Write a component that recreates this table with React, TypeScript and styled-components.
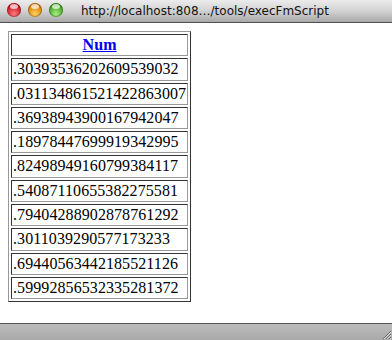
import React from "react";
import styled, { createGlobalStyle } from "styled-components";

const nums = [
  ".30393536202609539032",
  ".031134861521422863007",
  ".36938943900167942047",
  ".18978447699919342995",
  ".82498949160799384117",
  ".54087110655382275581",
  ".79404288902878761292",
  ".3011039290577173233",
  ".69440563442185521126",
  ".59992856532335281372",
];

const GlobalStyle = createGlobalStyle`
  html, body {
    margin: 0;
    padding: 0;
    background: #fff;
  }
`;

const Window = styled.div`
  width: 392px;
  height: 340px;
  display: flex;
  flex-direction: column;
  overflow: hidden;
`;

const TitleBar = styled.div`
  height: 22px;
  flex: none;
  display: flex;
  align-items: center;
  padding-left: 7px;
  background: linear-gradient(#ececec, #d2d2d2 50%, #a9a9a9);
  border-bottom: 1px solid #4f4f4f;
`;

const Lights = styled.div`
  display: flex;
  gap: 7px;
  margin-right: 18px;
  margin-top: -3px;
`;

const Light = styled.span<{ $c1: string; $c2: string }>`
  width: 14px;
  height: 14px;
  border-radius: 50%;
  background: radial-gradient(circle at 50% 78%, ${(p) => p.$c2}, ${(p) => p.$c1} 70%);
  box-shadow: inset 0 0 0 1px rgba(0, 0, 0, 0.25);
  position: relative;
  &::after {
    content: "";
    position: absolute;
    left: 3px;
    top: 1px;
    width: 8px;
    height: 5px;
    border-radius: 50%;
    background: rgba(255, 255, 255, 0.7);
  }
`;

const Title = styled.div`
  font-family: "DejaVu Sans", sans-serif;
  font-size: 12px;
  color: #111;
  white-space: nowrap;
  margin-top: -1px;
`;

const Content = styled.div`
  flex: 1;
  padding: 8px;
  background: #fff;
`;

const Table = styled.table`
  border: 1px solid;
  border-color: #999 #333 #333 #999;
  border-spacing: 2px;
  font-family: "Liberation Serif", "Times New Roman", serif;
  font-size: 16px;
  letter-spacing: 0.08px;
  color: #000;
`;

const Cell = styled.td`
  border: 1px solid;
  border-color: #333 #999 #999 #333;
  padding: 1px;
  line-height: 18.3px;
`;

const HeadCell = styled(Cell).attrs({ as: "th" })`
  text-align: center;
  font-weight: bold;
`;

const HeadLink = styled.a`
  color: #0000ee;
  text-decoration: underline;
`;

const StatusBar = styled.div`
  height: 16px;
  flex: none;
  border-top: 1px solid #555;
  background: linear-gradient(#bdbdbd, #a9a9a9);
  display: flex;
  justify-content: flex-end;
  align-items: flex-end;
`;

export default function App() {
  return (
    <Window>
      <GlobalStyle />
      <TitleBar>
        <Lights>
          <Light $c1="#c8101a" $c2="#ff7a80" />
          <Light $c1="#d87a00" $c2="#ffd060" />
          <Light $c1="#3a9a1a" $c2="#a8f080" />
        </Lights>
        <Title>http://localhost:808…/tools/execFmScript</Title>
      </TitleBar>
      <Content>
        <Table>
          <thead>
            <tr>
              <HeadCell>
                <HeadLink href="#">Num</HeadLink>
              </HeadCell>
            </tr>
          </thead>
          <tbody>
            {nums.map((n, i) => (
              <tr key={i}>
                <Cell>{n}</Cell>
              </tr>
            ))}
          </tbody>
        </Table>
      </Content>
      <StatusBar>
        <svg width="12" height="12" viewBox="0 0 12 12">
          <path d="M11 3 L3 11 M11 6 L6 11 M11 9 L9 11" stroke="#666" strokeWidth="1" />
          <path d="M11 4 L4 11 M11 7 L7 11 M11 10 L10 11" stroke="#ddd" strokeWidth="1" />
        </svg>
      </StatusBar>
    </Window>
  );
}
